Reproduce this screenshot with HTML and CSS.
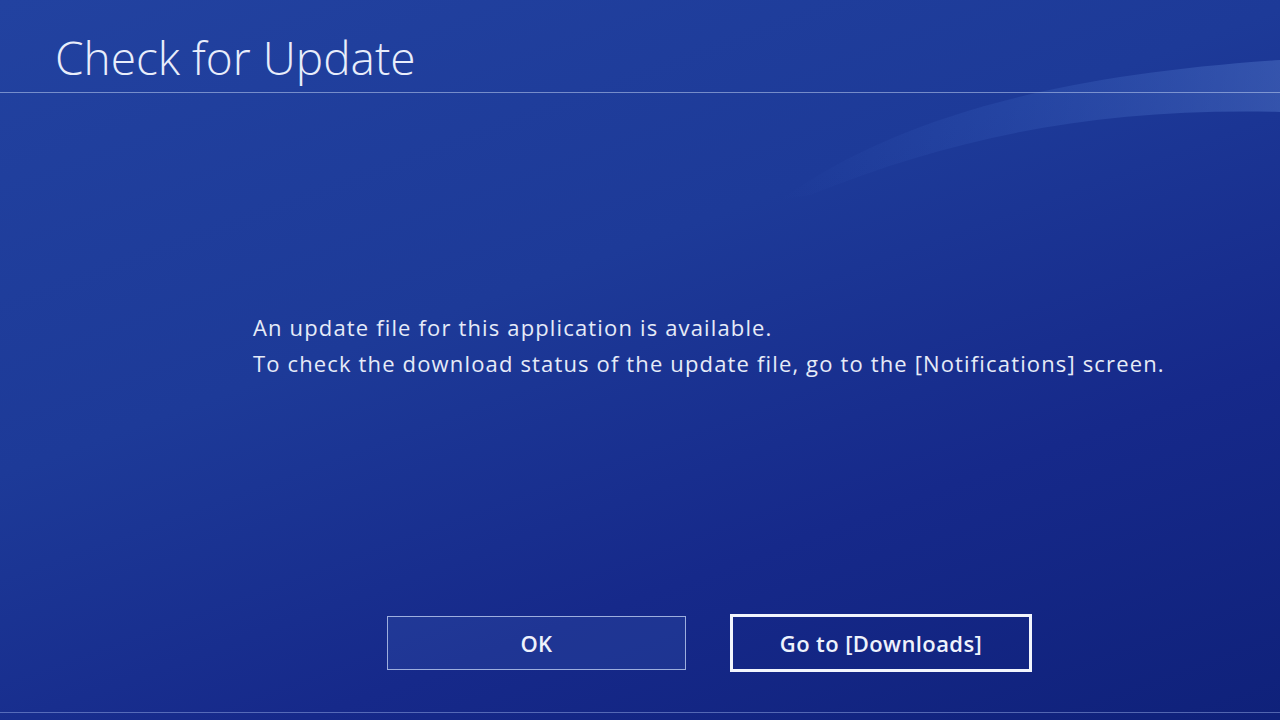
FILE: index.html
```html
<!DOCTYPE html>
<html lang="en">
<head>
    <meta charset="UTF-8">
    <meta name="viewport" content="width=device-width, initial-scale=1.0">
    <title>Check for Update</title>
    <link rel="stylesheet" href="styles.css">
</head>
<body>
    <svg class="wave" width="1280" height="720" viewBox="0 0 1280 720">
        <defs>
            <linearGradient id="waveFade" x1="0" y1="0" x2="1" y2="0">
                <stop offset="0" stop-color="#3a62c0" stop-opacity="0"/>
                <stop offset="0.45" stop-color="#3a62c0" stop-opacity="0.25"/>
                <stop offset="1" stop-color="#5a80d0" stop-opacity="0.4"/>
            </linearGradient>
        </defs>
        <path d="M780 200 C 900 115, 1060 75, 1280 60 L 1280 112 C 1100 108, 960 135, 810 195 Z" fill="url(#waveFade)"/>
    </svg>
    <div class="screen">
        <div class="header">
            <h1 class="title">Check for Update</h1>
        </div>
        <div class="message">
            <p>An update file for this application is available.</p>
            <p>To check the download status of the update file, go to the [Notifications] screen.</p>
        </div>
        <div class="actions">
            <div class="btn">OK</div>
            <div class="btn focused">Go to [Downloads]</div>
        </div>
        <div class="footer"></div>
    </div>
</body>
</html>
```

FILE: styles.css
```css
* {
    margin: 0;
    padding: 0;
    box-sizing: border-box;
}
body {
    width: 1280px;
    height: 720px;
    overflow: hidden;
    font-family: "Open Sans", "Noto Sans", sans-serif;
    color: #e6ebf8;
    background: linear-gradient(160deg, #2242a0 0%, #1d3a98 40%, #16298a 70%, #0f217a 100%);
    position: relative;
}
.wave {
    position: absolute;
    top: 0;
    left: 0;
}
.screen {
    position: relative;
    height: 720px;
    display: flex;
    flex-direction: column;
}
.header {
    height: 93px;
    border-bottom: 1px solid rgba(190, 205, 240, 0.55);
    padding-left: 55px;
    padding-top: 34px;
}
.title {
    font-size: 46px;
    font-weight: 300;
    line-height: 1;
    color: #e8edfb;
}
.message {
    margin-top: 216px;
    padding-left: 253px;
    font-size: 22px;
    letter-spacing: 1.15px;
    line-height: 36px;
}
.actions {
    margin-top: 233px;
    padding-left: 387px;
    display: flex;
    align-items: center;
    gap: 44px;
}
.btn {
    width: 299px;
    height: 54px;
    border: 1px solid rgba(200, 215, 245, 0.75);
    background: rgba(60, 90, 180, 0.25);
    display: flex;
    align-items: center;
    justify-content: center;
    font-size: 22px;
    font-weight: 600;
    letter-spacing: 0.4px;
    color: #eef2fc;
}
.btn.focused {
    width: 302px;
    height: 58px;
    border: 3px solid #f2f5fd;
    background: transparent;
}
.footer {
    margin-top: auto;
    height: 8px;
    border-top: 1px solid rgba(150, 170, 230, 0.5);
}
```
